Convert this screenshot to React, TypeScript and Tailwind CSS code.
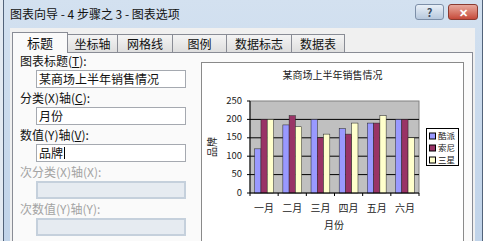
import React from 'react';

const tabs = [
  { label: '标题', cls: 'w-[56px]' },
  { label: '坐标轴', cls: 'w-[51px]' },
  { label: '网格线', cls: 'w-[56px]' },
  { label: '图例', cls: 'w-[55px]' },
  { label: '数据标志', cls: 'w-[66px]' },
  { label: '数据表', cls: 'w-[54px]' },
];

const months = ['一月', '二月', '三月', '四月', '五月', '六月'];
const data = [
  [120, 200, 200],
  [185, 210, 180],
  [200, 150, 160],
  [175, 160, 190],
  [190, 190, 210],
  [200, 200, 150],
];
const colors = ['#9999ff', '#993366', '#ffffcc'];
const brands = ['酷派', '索尼', '三星'];

// plot area, in chart-box coordinates
const px0 = 48;
const px1 = 217;
const py0 = 38;
const py1 = 130;
const scale = (py1 - py0) / 250;
const groupW = (px1 - px0) / 6;
const barW = groupW / 4.5;

const Label = ({ children, disabled }: { children: React.ReactNode; disabled?: boolean }) => (
  <div className={`h-[14px] leading-[14px] text-[12px] ${disabled ? 'text-[#a3a3a3]' : 'text-[#111]'}`}>{children}</div>
);

const Field = ({ value, cursor, disabled }: { value?: string; cursor?: boolean; disabled?: boolean }) => (
  <div
    className={`ml-[16px] mt-[2px] mb-[3px] w-[150px] h-[18px] flex items-center pl-[2px] text-[12px] leading-none ${
      disabled
        ? 'bg-[#e6ebf1] border-2 border-[#c5d0dc]'
        : 'bg-white border border-[#a5a9b0] text-[#111]'
    }`}
  >
    {value}
    {cursor && <span className="inline-block w-px h-[12px] bg-black ml-px" />}
  </div>
);

const Chart = () => (
  <svg width="261" height="180" className="block">
    <text x="130.5" y="13" fontSize="10" textAnchor="middle" dominantBaseline="middle" fill="#222">
      某商场上半年销售情况
    </text>

    <rect x={px0} y={py0} width={px1 - px0} height={py1 - py0} fill="#c0c0c0" stroke="#808080" strokeWidth="1" />
    {[50, 100, 150, 200].map((v) => (
      <line key={v} x1={px0} x2={px1} y1={py1 - v * scale} y2={py1 - v * scale} stroke="#000" strokeWidth="1" />
    ))}

    {data.map((g, i) =>
      g.map((v, j) => {
        const x = px0 + i * groupW + barW * 0.75 + j * barW;
        const h = v * scale;
        return (
          <rect key={`${i}-${j}`} x={x} y={py1 - h} width={barW} height={h} fill={colors[j]} stroke="#222" strokeWidth="0.5" />
        );
      })
    )}

    <line x1={px0} x2={px0} y1={py0} y2={py1} stroke="#000" />
    <line x1={px0} x2={px1} y1={py1} y2={py1} stroke="#000" />
    {[0, 50, 100, 150, 200, 250].map((v) => (
      <g key={v}>
        <line x1={px0 - 3} x2={px0} y1={py1 - v * scale} y2={py1 - v * scale} stroke="#000" />
        <text x="40" y={py1 - v * scale} fontSize="9.5" textAnchor="end" dominantBaseline="middle" fill="#222">
          {v}
        </text>
      </g>
    ))}
    {[0, 1, 2, 3, 4, 5, 6].map((i) => (
      <line key={i} x1={px0 + i * groupW} x2={px0 + i * groupW} y1={py1} y2={py1 + 3} stroke="#000" />
    ))}
    {months.map((m, i) => (
      <text key={m} x={px0 + i * groupW + groupW / 2} y="146" fontSize="10" textAnchor="middle" dominantBaseline="middle" fill="#222">
        {m}
      </text>
    ))}
    <text x="132" y="163" fontSize="10" textAnchor="middle" dominantBaseline="middle" fill="#222">
      月份
    </text>
    <text x="11" y="84" fontSize="10" textAnchor="middle" dominantBaseline="middle" fill="#222" transform="rotate(-90 11 84)">
      品牌
    </text>

    <rect x="224.5" y="65.5" width="32" height="37" fill="#fff" stroke="#000" />
    {brands.map((b, i) => (
      <g key={b}>
        <rect x="227.5" y={70 + i * 12} width="6" height="6" fill={colors[i]} stroke="#000" />
        <text x="236" y={73.5 + i * 12} fontSize="8.5" dominantBaseline="middle" fill="#222">
          {b}
        </text>
      </g>
    ))}
  </svg>
);

export default function App() {
  return (
    <div className="w-[483px] h-[241px] overflow-hidden bg-[#e3eaf2] pl-[3px] font-['Noto_Sans_CJK_SC',sans-serif]">
      <div className="h-full flex flex-col border-x border-[#52637a] bg-gradient-to-b from-[#d3e1f0] to-[#c0d3e9]">
        {/* title bar */}
        <div className="h-[28px] flex items-start shrink-0">
          <div className="ml-[6px] h-[28px] flex items-center text-[12px] text-[#111]">图表向导 - 4 步骤之 3 - 图表选项</div>
          <div className="ml-auto mr-[4px] mt-[4px] flex gap-[4px]">
            <div className="w-[29px] h-[16px] rounded-[3px] border border-[#7d8fa8] bg-gradient-to-b from-[#e9f0f8] to-[#b7c8dd] flex items-center justify-center text-[11px] font-bold text-[#3b4a5e] leading-none">
              ?
            </div>
            <div className="w-[30px] h-[16px] rounded-[3px] border border-[#8a3a30] bg-gradient-to-b from-[#e7a89d] to-[#c5493a] flex items-center justify-center text-[11px] font-bold text-white leading-none">
              ✕
            </div>
          </div>
        </div>

        {/* dialog body */}
        <div className="flex-1 ml-[6px] mr-[7px] bg-[#f0f0f0] flex flex-col pt-[4px] px-[2px]">
          <div className="flex items-start text-[12px] text-[#111]">
            {tabs.map((t, i) =>
              i === 0 ? (
                <div
                  key={t.label}
                  className={`${t.cls} h-[21px] relative z-10 -mb-px border border-b-0 border-[#898c95] bg-[#fafafa] flex items-center justify-center text-[13px]`}
                >
                  {t.label}
                </div>
              ) : (
                <div
                  key={t.label}
                  className={`${t.cls} -ml-px mt-[2px] h-[18px] border border-b-0 border-[#898c95] bg-gradient-to-b from-[#f4f4f4] to-[#dedede] flex items-center justify-center`}
                >
                  {t.label}
                </div>
              )
            )}
          </div>

          {/* tab panel */}
          <div className="flex-1 border border-[#898c95] bg-[#fafafa] flex">
            <div className="w-[188px] pl-[7px] pt-[1px] shrink-0">
              <Label>
                图表标题(<span className="underline">T</span>):
              </Label>
              <Field value="某商场上半年销售情况" />
              <Label>
                分类(X)轴(<span className="underline">C</span>):
              </Label>
              <Field value="月份" />
              <Label>
                数值(Y)轴(<span className="underline">V</span>):
              </Label>
              <Field value="品牌" cursor />
              <Label disabled>次分类(X)轴(X):</Label>
              <Field disabled />
              <Label disabled>次数值(Y)轴(Y):</Label>
              <Field disabled />
            </div>
            <div className="mt-[9px] w-[263px] h-[190px] border border-[#8a8a8a] bg-white shrink-0">
              <Chart />
            </div>
          </div>
        </div>
      </div>
    </div>
  );
}
